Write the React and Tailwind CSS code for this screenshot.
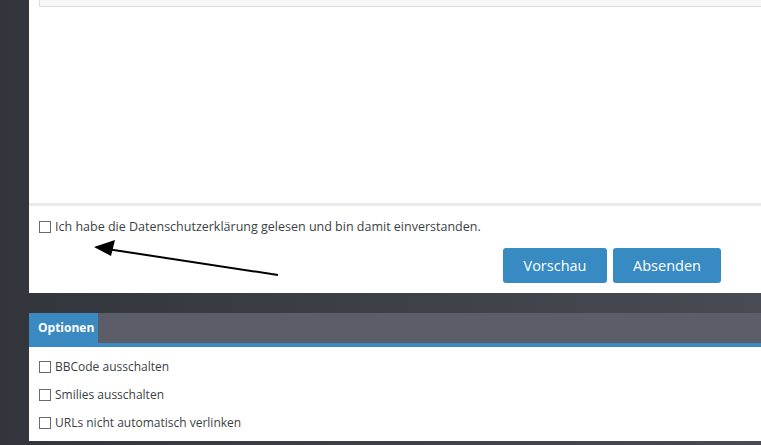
import React from 'react';

const font = { fontFamily: '"Open Sans", "Noto Sans", Arial, sans-serif' };

const Box = () => (
  <span className="inline-block w-[12px] h-[12px] border border-[#6b6b6b] bg-white shrink-0" />
);

const Option = ({ label }) => (
  <label className="flex items-center gap-[4px] h-[28px] text-[12px] text-[#3b3f45]">
    <Box />
    <span>{label}</span>
  </label>
);

export default function App() {
  return (
    <div
      className="relative w-[761px] h-[445px] overflow-hidden bg-gradient-to-r from-[#32353c] to-[#484b53] pl-[29px]"
      style={font}
    >
      {/* post form */}
      <div className="relative h-[293px] bg-white flex flex-col">
        <div className="ml-[10px] h-[7px] bg-[#f7f7f7] border-l border-b border-[#dcdcdc]" />
        <div className="flex-1" />
        <div className="h-[3px] bg-[#ebebeb]" />
        <div className="px-[10px] mt-[12px] h-[18px] flex items-center gap-[4px] text-[12.5px] text-[#3b3f45]">
          <Box />
          <span>Ich habe die Datenschutzerklärung gelesen und bin damit einverstanden.</span>
        </div>
        <div className="flex justify-end gap-[6px] pr-[40px] pt-[12px] pb-[10px]">
          <button className="w-[104px] h-[35px] rounded-[3px] bg-[#378ac2] text-white text-[14.5px]">
            Vorschau
          </button>
          <button className="w-[108px] h-[35px] rounded-[3px] bg-[#378ac2] text-white text-[14.5px]">
            Absenden
          </button>
        </div>
        <svg className="absolute left-[64px] top-[240px]" width="190" height="40" viewBox="0 0 190 40">
          <line x1="185" y1="35" x2="14" y2="9" stroke="#000" strokeWidth="2" />
          <polygon points="1,7 22,0 18,16" fill="#000" />
        </svg>
      </div>

      {/* options */}
      <div className="mt-[20px]">
        <div className="flex h-[30px] bg-[#5b5d69]">
          <div className="w-[69px] bg-[#3a8ac1] text-white text-[12px] font-bold flex items-center pl-[9px]">
            Optionen
          </div>
        </div>
        <div className="h-[4px] bg-[#3a8ac1]" />
        <div className="bg-white h-[94px] px-[10px] pt-[6px]">
          <Option label="BBCode ausschalten" />
          <Option label="Smilies ausschalten" />
          <Option label="URLs nicht automatisch verlinken" />
        </div>
      </div>
    </div>
  );
}
